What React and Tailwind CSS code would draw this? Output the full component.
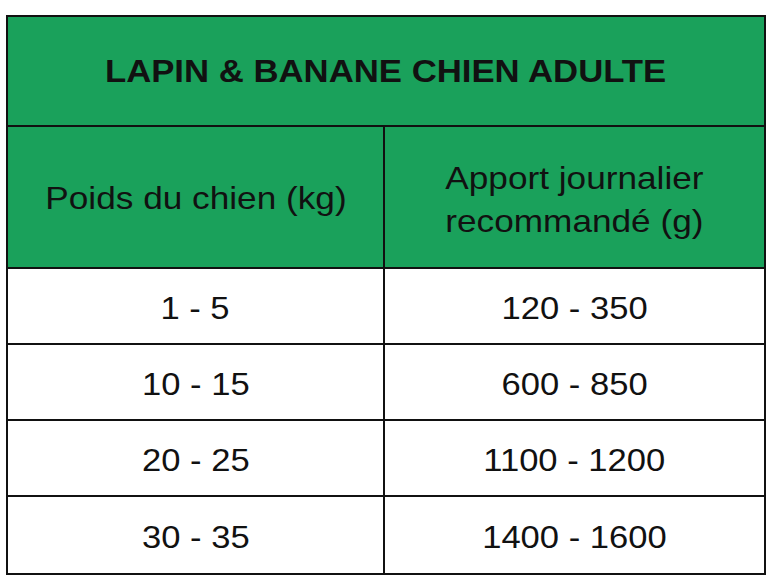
const ROWS = [
  ['1 - 5', '120 - 350'],
  ['10 - 15', '600 - 850'],
  ['20 - 25', '1100 - 1200'],
  ['30 - 35', '1400 - 1600'],
];

export default function App() {
  return (
    <div className="w-[780px] h-[580px] bg-white pt-[15px] pl-[6px] font-['Liberation_Sans',Arial,sans-serif] text-[#111]">
      <div className="w-[760px] border-2 border-[#111]">
        <div className="h-[110px] bg-[#1aa15b] flex items-center justify-center border-b-2 border-[#111] pt-[2px]">
          <h1 className="text-[31px] font-bold inline-block scale-x-[1.12]">LAPIN &amp; BANANE CHIEN ADULTE</h1>
        </div>
        <div className="grid grid-cols-[377px_1fr] bg-[#1aa15b] h-[142px] border-b-2 border-[#111]">
          <div className="flex items-center justify-center border-r-2 border-[#111] text-[32px] pt-[2px]">
            <span className="inline-block scale-x-[1.1]">Poids du chien (kg)</span>
          </div>
          <div className="flex flex-col items-center justify-center text-[32px] leading-[43px] text-center pt-[5px]">
            <span className="inline-block scale-x-[1.1]">Apport journalier</span>
            <span className="inline-block scale-x-[1.1]">recommandé (g)</span>
          </div>
        </div>
        {ROWS.map(([a, b], i) => (
          <div
            key={a}
            className={`grid grid-cols-[377px_1fr] h-[76px] text-[32px] pt-[3px] ${i < ROWS.length - 1 ? 'border-b-2 border-[#111]' : ''}`}
          >
            <div className="flex items-center justify-center border-r-2 border-[#111] -mt-[3px] pt-[3px]">
              <span className="inline-block scale-x-[1.08]">{a}</span>
            </div>
            <div className="flex items-center justify-center">
              <span className="inline-block scale-x-[1.08]">{b}</span>
            </div>
          </div>
        ))}
      </div>
    </div>
  );
}
